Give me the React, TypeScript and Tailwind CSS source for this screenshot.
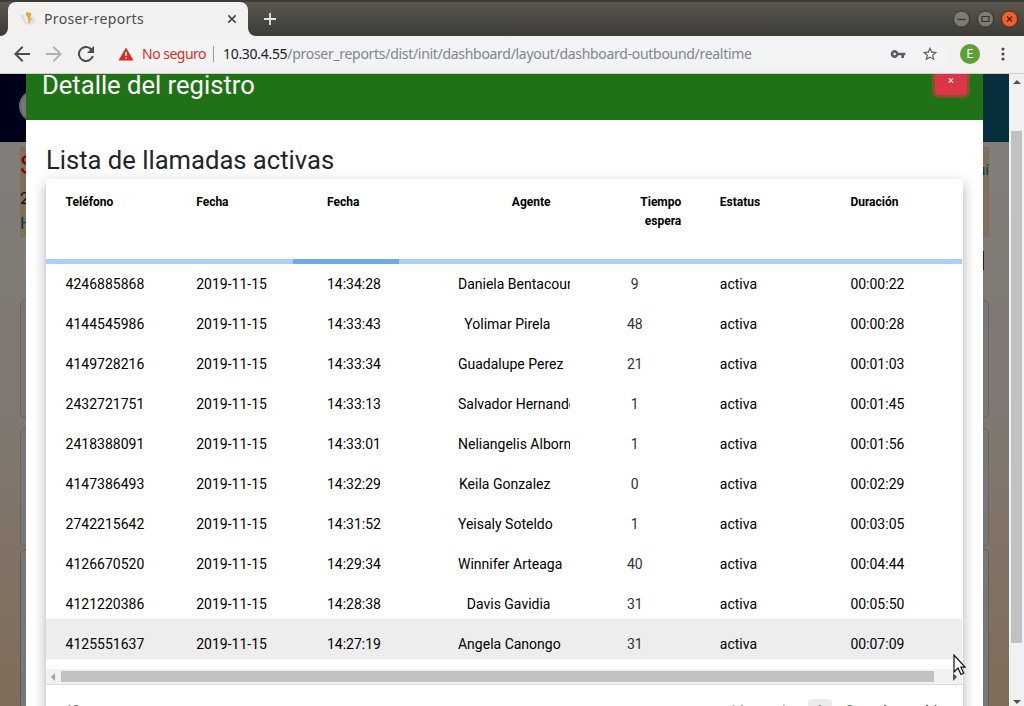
import React from "react";

type Call = [string, string, string, string, string];

const calls: Call[] = [
  ["4246885868", "14:34:28", "Daniela Bentacourt", "9", "00:00:22"],
  ["4144545986", "14:33:43", "Yolimar Pirela", "48", "00:00:28"],
  ["4149728216", "14:33:34", "Guadalupe Perez", "21", "00:01:03"],
  ["2432721751", "14:33:13", "Salvador Hernandez", "1", "00:01:45"],
  ["2418388091", "14:33:01", "Neliangelis Albornoz", "1", "00:01:56"],
  ["4147386493", "14:32:29", "Keila Gonzalez", "0", "00:02:29"],
  ["2742215642", "14:31:52", "Yeisaly Soteldo", "1", "00:03:05"],
  ["4126670520", "14:29:34", "Winnifer Arteaga", "40", "00:04:44"],
  ["4121220386", "14:28:38", "Davis Gavidia", "31", "00:05:50"],
  ["4125551637", "14:27:19", "Angela Canongo", "31", "00:07:09"],
];

const columns = "grid grid-cols-[repeat(7,130.8px)]";

function TitleBar() {
  return (
    <div className="flex h-9 shrink-0 bg-gradient-to-b from-[#5a574e] to-[#3c3b37] border-t-2 border-[#3d3c37]">
      <div className="flex h-full w-2 items-end justify-end">
        <svg width="8" height="8" viewBox="0 0 8 8"><path d="M8 0v8H0a8 8 0 0 0 8-8z" fill="#f2f1f0" /></svg>
      </div>
      <div className="flex h-full w-60 items-center rounded-t-lg bg-[#f2f1f0] pl-3 pr-[11px]">
        <svg width="16" height="16" viewBox="0 0 16 16" className="shrink-0">
          <path d="M9 4l3-1 4 8-6 4z" fill="#dfe2e9" />
          <path d="M0 4l3-1 5 11-3-1z" fill="#dadde6" />
          <path d="M6 1l5 1-1 5-2 0-2-3z" fill="#e4a53a" />
          <path d="M8 6l4 1-3 6-1-1z" fill="#e9ad45" />
        </svg>
        <span className="ml-2 grow whitespace-nowrap text-[14px] leading-5 tracking-[0.33px] text-[#4c4c4c]">Proser-reports</span>
        <svg width="10" height="10" viewBox="0 0 10 10"><path d="M1.3 1.3l7.4 7.4M8.7 1.3l-7.4 7.4" stroke="#4a4a4a" strokeWidth="1.7" /></svg>
      </div>
      <div className="flex h-full w-2 items-end">
        <svg width="8" height="8" viewBox="0 0 8 8"><path d="M0 0v8h8a8 8 0 0 1-8-8z" fill="#f2f1f0" /></svg>
      </div>
      <div className="flex grow items-center pl-[8px] pr-[6px]">
        <svg width="12" height="12" viewBox="0 0 12 12"><path d="M6 0v12M0 6h12" stroke="#e6e5e2" strokeWidth="1.8" /></svg>
        <div className="ml-auto flex gap-[7px]">
          <svg width="17" height="18" viewBox="0 0 17 18"><circle cx="8.5" cy="9" r="8" fill="#7d7b72" stroke="#34332f" /><path d="M4.5 9.5h8" stroke="#34332f" strokeWidth="1.2" /></svg>
          <svg width="17" height="18" viewBox="0 0 17 18"><circle cx="8.5" cy="9" r="8" fill="#7d7b72" stroke="#34332f" /><path d="M5 6.5h7v5H5z" fill="none" stroke="#34332f" strokeWidth="1.2" /></svg>
          <svg width="17" height="18" viewBox="0 0 17 18"><circle cx="8.5" cy="9" r="8" fill="#f0602f" stroke="#4a2a1c" /><path d="M6 6.5l5 5M11 6.5l-5 5" stroke="#4a2418" strokeWidth="1.4" /></svg>
        </div>
      </div>
    </div>
  );
}

function Toolbar() {
  return (
    <div className="flex h-[38px] shrink-0 items-center border-b border-[#cfcecd] bg-[#f2f1f0] pb-px pl-[14px]">
      <svg width="16" height="16" viewBox="4 4 16 16"><path d="M20 11H7.83l5.59-5.59L12 4l-8 8 8 8 1.41-1.41L7.83 13H20z" fill="#4a4b4d" /></svg>
      <svg width="16" height="16" viewBox="4 4 16 16" className="ml-4"><path d="M12 4l-1.41 1.41L16.17 11H4v2h12.17l-5.58 5.59L12 20l8-8z" fill="#b3b2b1" /></svg>
      <svg width="16" height="16" viewBox="4 4 16 16" className="ml-4"><path d="M17.65 6.35A8 8 0 1 0 19.73 14h-2.08A6 6 0 1 1 12 6c1.66 0 3.14.69 4.22 1.78L13 11h7V4z" fill="#4a4b4d" /></svg>
      <div className="ml-4 flex h-7 w-[840px] items-center rounded-full bg-[#f1f3f4] pl-2 pr-[12px]">
        <svg width="16" height="14" viewBox="0 0 16 14"><path d="M8 .5L15.5 13.5H.5z" fill="#d92b20" /><path d="M8 5v4M8 10.2v1.6" stroke="#fff" strokeWidth="1.5" /></svg>
        <span className="ml-2 w-[71px] whitespace-nowrap text-[14px] leading-5 tracking-[-0.5px] text-[#d93025]">No seguro</span>
        <div className="h-4 w-px bg-[#9a9da1]" />
        <span className="ml-[9px] grow whitespace-nowrap text-[14px] leading-5 tracking-[-0.3px] text-[#80868b]"><span className="text-[#202124]">10.30.4.55</span>/proser_reports/dist/init/dashboard/layout/dashboard-outbound/realtime</span>
        <svg width="16" height="16" viewBox="0 0 24 24"><path d="M12.65 10a6 6 0 1 0 0 4H17v4h4v-4h2v-4H12.65zM7 14a2 2 0 1 1 0-4 2 2 0 0 1 0 4z" fill="#5b5e63" /></svg>
        <svg width="16" height="16" viewBox="1 1 22 22" className="ml-4"><path d="M22 9.24l-7.19-.62L12 2 9.19 8.63 2 9.24l5.46 4.73L5.82 21 12 17.27 18.18 21l-1.63-7.03L22 9.24zM12 15.4l-3.76 2.27 1-4.28-3.32-2.88 4.38-.38L12 6.1l1.71 4.04 4.38.38-3.32 2.88 1 4.28L12 15.4z" fill="#5b5e63" /></svg>
      </div>
      <div className="ml-[10px] flex size-5 items-center justify-center rounded-full bg-[#5b9f35] font-[Roboto] text-[12px] text-white">E</div>
      <svg width="4" height="16" viewBox="0 0 4 16" className="ml-[21px]"><g fill="#4a4b4d"><circle cx="2" cy="3" r="1.6" /><circle cx="2" cy="8" r="1.6" /><circle cx="2" cy="13" r="1.6" /></g></svg>
    </div>
  );
}

function LeftBackdrop() {
  return (
    <div className="flex w-[26px] shrink-0 flex-col overflow-hidden">
      <div className="h-[68px] shrink-0 overflow-hidden bg-[#00001a] pl-[19px] pt-4">
        <div className="size-8 rounded-full border-2 border-[#69696d] bg-[#77777a]" />
      </div>
      <div className="flex grow flex-col bg-gradient-to-b from-[#817d79] via-[#807870] to-[#806c58] pl-5">
        <div className="mt-[5px] h-[90px] w-10 overflow-hidden bg-[#80705a] font-[Roboto]">
          <div className="mt-[2px] text-[26px] leading-[32px] text-[#800000]">S</div>
          <div className="mt-px text-[17px] leading-[32px] text-[#111]">2</div>
          <div className="text-[17px] leading-[18px] text-[#003c40]">H</div>
        </div>
        <div className="mt-[63px] h-[118px] w-10 rounded-[5px] border border-[#656563] bg-[#777877]" />
        <div className="mt-[10px] h-[118px] w-10 rounded-[5px] border border-[#656563] bg-[#777877]" />
        <div className="mt-[3px] h-[170px] w-10 rounded-t-[5px] border border-[#5c5d5e] bg-[#777877]" />
      </div>
    </div>
  );
}

function RightBackdrop() {
  return (
    <div className="flex w-[26px] shrink-0 flex-col overflow-hidden">
      <div className="h-[68px] shrink-0 bg-[#07303d]" />
      <div className="flex grow flex-col bg-gradient-to-b from-[#817d79] via-[#807870] to-[#806c58] pr-5">
        <div className="mt-[5px] flex h-[90px] justify-end overflow-hidden bg-[#80705a] pt-[13px] font-[Roboto] text-[15px] leading-5 text-[#003c40]">uí</div>
        <div className="mt-[14px] h-[19px] w-px bg-[#0c2b49]" />
        <div className="mt-[30px] h-[118px] rounded-r-[5px] border border-l-0 border-[#656563] bg-[#777877]" />
        <div className="mt-[10px] h-[118px] rounded-r-[5px] border border-l-0 border-[#656563] bg-[#777877]" />
        <div className="mt-[3px] h-[170px] rounded-tr-[5px] border border-l-0 border-[#5c5d5e] bg-[#777877]" />
      </div>
    </div>
  );
}

function Pager() {
  return (
    <div className="ml-auto mr-[26px] flex items-start">
      <svg width="12" height="12" viewBox="0 0 12 12" className="mt-[5px]"><path d="M1.5 1v10M10.5 1l-5 5 5 5" fill="none" stroke="#9b9b9b" strokeWidth="1.6" /></svg>
      <svg width="8" height="12" viewBox="0 0 8 12" className="ml-[34px] mt-[5px]"><path d="M6.5 1l-5 5 5 5" fill="none" stroke="#9b9b9b" strokeWidth="1.6" /></svg>
      <span className="ml-[22px] h-7 w-6 rounded-sm bg-[#ebebeb] pt-[3px] text-center leading-4">1</span>
      <span className="ml-[14px] mt-[3px] leading-4">2</span>
      <svg width="8" height="12" viewBox="0 0 8 12" className="ml-[30px] mt-[5px]"><path d="M1.5 1l5 5-5 5" fill="none" stroke="#555" strokeWidth="1.6" /></svg>
      <svg width="12" height="12" viewBox="0 0 12 12" className="ml-[34px] mt-[5px]"><path d="M1.5 1l5 5-5 5M10.5 1v10" fill="none" stroke="#555" strokeWidth="1.6" /></svg>
    </div>
  );
}

function CallsTable() {
  return (
    <div className="relative h-[560px] w-[917px] bg-white text-black shadow-[0_5px_5px_-3px_rgba(0,0,0,0.2),0_8px_10px_1px_rgba(0,0,0,0.14),0_3px_14px_2px_rgba(0,0,0,0.12)]">
      <div className={columns + " h-20 pt-[14px] text-[12px] font-bold leading-[19px]"}>
        <div className="pl-[19.6px]">Teléfono</div>
        <div className="pl-[19.4px]">Fecha</div>
        <div className="pl-[19.4px]">Fecha</div>
        <div className="pr-[18.7px] text-right">Agente</div>
        <div className="pr-[18.7px] text-right">Tiempo<br />espera</div>
        <div className="pl-[19.8px]">Estatus</div>
        <div className="pl-[19.6px]">Duración</div>
      </div>
      <div className="h-[5px] w-[916px] bg-[#a7cff9] pl-[246.5px]">
        <div className="h-full w-[106px] bg-[#71a8e8]" />
      </div>
      <div className="-mt-[5px] text-[14px] leading-5">
        {calls.map(([phone, time, agent, wait, duration], i) => (
          <div key={phone} className={columns + " h-10 w-[916px] pt-[15px] " + (i === 9 ? "bg-[#ededed]" : "")}>
            <div className="pl-[19.6px]">{phone}</div>
            <div className="pl-[19.4px]">2019-11-15</div>
            <div className="pl-[19.4px]">{time}</div>
            <div className="ml-[19.6px] w-[112.4px] overflow-hidden whitespace-nowrap pr-[19.9px] text-right">{agent}</div>
            <div className="ml-[19.6px] w-[92px] text-center text-[#333]">{wait}</div>
            <div className="pl-[19.8px]">activa</div>
            <div className="pl-[19.6px]">{duration}</div>
          </div>
        ))}
      </div>
      <div className="mt-[10px] flex h-[15px] w-[916px] items-center justify-between bg-[#f1f1f1] pl-[5px] pr-[5px]">
        <svg width="4" height="8" viewBox="0 0 4 8"><path d="M4 0v8L0 4z" fill="#a3a3a3" /></svg>
        <div className="ml-[6px] mr-auto h-[11px] w-[873px] bg-[#c1c1c1]" />
        <svg width="4" height="8" viewBox="0 0 4 8"><path d="M0 0v8l4-4z" fill="#505050" /></svg>
      </div>
      <div className="flex h-10 items-start border-t border-[#dedede] pl-5 pt-[14px] text-[13px] text-[#666]">
        <span className="mt-[3px] text-[12px] leading-4">10</span>
        <Pager />
      </div>
      <svg width="13" height="22" viewBox="0 0 13 22" className="absolute left-[907px] top-[475px]">
        <path d="M1 1v17l4-4 3 6.5 2.7-1.2-2.8-6.2H12z" fill="#fff" stroke="#111" strokeWidth="1.2" />
      </svg>
    </div>
  );
}

function Modal() {
  return (
    <div className="flex w-[957px] shrink-0 flex-col bg-white font-[Roboto]">
      <div className="flex h-[46px] shrink-0 justify-between overflow-hidden bg-[#1f7316] pl-4 pr-[16px]">
        <h2 className="-mt-[5px] text-[25.6px] leading-8 text-white">Detalle del registro</h2>
        <div className="-mt-3 flex h-[33px] w-[32px] items-center justify-center rounded-[4px] bg-[#dc3545] text-[11px] text-white shadow-[0_0_0_3px_rgba(225,53,67,0.5)]"><span className="mt-[5px]">×</span></div>
      </div>
      <div className="pl-5 pt-[24px]">
        <h3 className="h-[35px] text-[25.6px] leading-8 text-[#212529]">Lista de llamadas activas</h3>
        <CallsTable />
      </div>
    </div>
  );
}

export default function App() {
  return (
    <div className="flex h-[706px] w-[1024px] flex-col overflow-hidden font-['Noto_Sans',sans-serif]">
      <TitleBar />
      <Toolbar />
      <div className="flex min-h-0 grow overflow-hidden">
        <LeftBackdrop />
        <Modal />
        <RightBackdrop />
        <div className="flex w-[15px] shrink-0 flex-col items-center justify-between bg-[#f1f1f1] py-[6px]">
          <svg width="8" height="4" viewBox="0 0 8 4"><path d="M0 4h8L4 0z" fill="#505050" /></svg>
          <div className="mb-auto mt-[47px] h-[512px] w-[11px] bg-[#c1c1c1]" />
          <svg width="8" height="4" viewBox="0 0 8 4" className="-mb-[4px]"><path d="M0 0h8L4 4z" fill="#505050" /></svg>
        </div>
      </div>
    </div>
  );
}
